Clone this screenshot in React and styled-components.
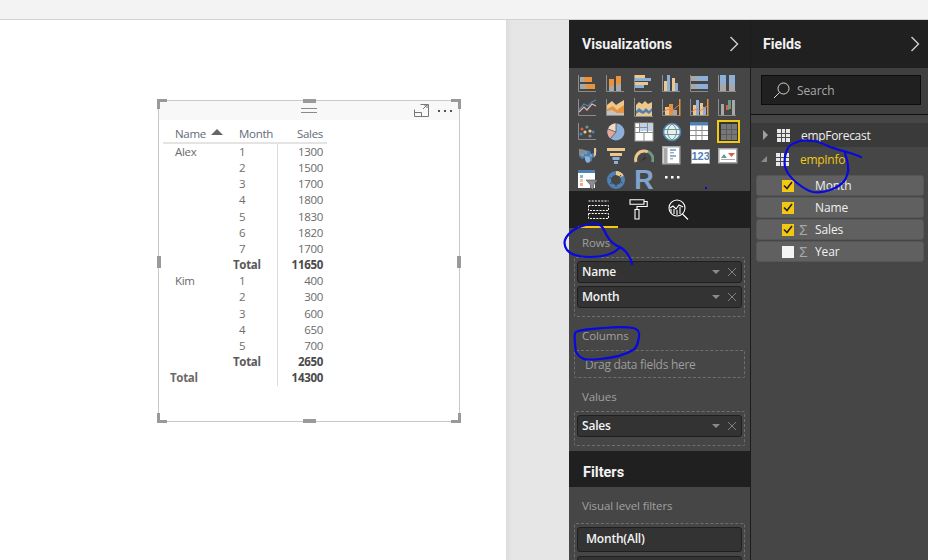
import React from "react";
import styled, { createGlobalStyle } from "styled-components";

const GlobalStyle = createGlobalStyle`
  html, body {
    margin: 0;
    height: 100%;
    overflow: hidden;
    background: #fff;
    font-family: "Open Sans", "Noto Sans", sans-serif;
  }
`;

const ORANGE = "#e8923e";
const GREY = "#a8a8a8";
const BLUE = "#8db0d8";
const TAN = "#ecc88e";
const AXIS = "#8c8c8c";
const DARKBLUE = "#4f81b5";

const Axis = () => <path d="M.5 1v16.5H18" fill="none" stroke={AXIS} />;

const R = ({ x, y, w, h, c }) => <rect x={x} y={y} width={w} height={h} fill={c} />;

const icons = [
  <><Axis /><R x={2} y={3} w={4} h={5} c={GREY} /><R x={6} y={3} w={8} h={5} c={ORANGE} /><R x={2} y={10} w={6} h={5} c={GREY} /><R x={8} y={10} w={9} h={5} c={ORANGE} /></>,
  <><Axis /><R x={3} y={12} w={5} h={5} c={GREY} /><R x={3} y={5} w={5} h={7} c={ORANGE} /><R x={10} y={10} w={5} h={7} c={GREY} /><R x={10} y={2} w={5} h={8} c={ORANGE} /></>,
  <><Axis /><R x={1} y={1} w={10} h={3} c={TAN} /><R x={1} y={4} w={16} h={3} c={BLUE} /><R x={1} y={8} w={13} h={3} c={TAN} /><R x={1} y={11} w={9} h={3} c={BLUE} /></>,
  <><Axis /><R x={2} y={7} w={3} h={10} c={TAN} /><R x={5} y={1} w={3} h={16} c={BLUE} /><R x={10} y={4} w={3} h={13} c={TAN} /><R x={13} y={9} w={3} h={8} c={BLUE} /></>,
  <><Axis /><R x={1} y={2} w={6} h={5} c={GREY} /><R x={7} y={2} w={11} h={5} c={BLUE} /><R x={1} y={10} w={6} h={5} c={GREY} /><R x={7} y={10} w={11} h={5} c={BLUE} /></>,
  <><Axis /><R x={2} y={10} w={6} h={7} c={GREY} /><R x={2} y={1} w={6} h={9} c={BLUE} /><R x={11} y={11} w={6} h={6} c={GREY} /><R x={11} y={1} w={6} h={10} c={BLUE} /></>,
  <><Axis /><path d="M1 14l5-5 3 3 5-6 4 2" fill="none" stroke="#e3b7a4" strokeWidth="1.2" /><path d="M1 12l5-6 4 2 4-4 4-2" fill="none" stroke={DARKBLUE} strokeWidth="1.2" /></>,
  <><Axis /><path d="M1 17V7l5-4 4 4 3-2 5-3v15z" fill={TAN} /><path d="M1 17v-6l6-3 4 4 7-5v10z" fill={ORANGE} /><path d="M1 17v-4l5-1 5 3 7 0v2z" fill="#c2c2c2" /></>,
  <><path d="M.5 0v18.5H19" fill="none" stroke={AXIS} /><path d="M2 18V7l3-3 3 2 3-3 3 3 4-2v14z" fill={TAN} /><path d="M2 13l3-3 4 3 3-3 3 3 3-3v3l-3 3-3-2-3 2-4-2-3 2z" fill={DARKBLUE} /></>,
  <><Axis /><R x={3} y={9} w={4} h={8} c={TAN} /><R x={11} y={12} w={4} h={5} c={GREY} /><R x={7} y={6} w={4} h={11} c={ORANGE} /><path d="M1 14l5-3 4 2 7-6" fill="none" stroke="#dc7f5a" /><R x={17} y={1} w={1.5} h={17} c={ORANGE} /></>,
  <><Axis /><R x={3} y={7} w={3} h={10} c={TAN} /><R x={6} y={2} w={3} h={15} c={BLUE} /><R x={10} y={5} w={3} h={12} c={TAN} /><R x={13} y={9} w={3} h={8} c={BLUE} /><path d="M1 14l5-3 4 2 7-5" fill="none" stroke="#dc7f5a" /><R x={17} y={1} w={1.5} h={17} c={ORANGE} /></>,
  <><Axis /><R x={3} y={6} w={3} h={11} c={GREY} /><R x={8} y={7} w={3} h={5} c="#d8603f" /><R x={10} y={2} w={3} h={9} c="#6b9a86" /><R x={14} y={2} w={3} h={15} c={GREY} /></>,
  <><Axis /><circle cx="4" cy="7" r="1.6" fill="#d8603f" /><circle cx="9" cy="5" r="1.6" fill="#6b9a86" /><circle cx="7" cy="10" r="1.6" fill={TAN} /><circle cx="3" cy="12" r="1.6" fill={DARKBLUE} /><circle cx="12" cy="9" r="1.6" fill={TAN} /><circle cx="15" cy="10" r="1.6" fill={DARKBLUE} /><circle cx="12" cy="14" r="1.6" fill="#8c8c8c" /></>,
  <><circle cx="10" cy="10" r="8.5" fill={BLUE} /><path d="M10 10V1.5a8.5 8.5 0 0 0-8 5.5z" fill="#f2dcc0" /><path d="M10 10L2 7a8.5 8.5 0 0 0 2.5 9.5z" fill="#e6a89c" /><path d="M10 10V1.5M10 10L2 7M10 10l-5.5 6.5" stroke="#464646" strokeWidth=".7" /></>,
  <><rect x="1" y="1" width="18" height="18" fill="#fff" stroke="#9c9c9c" /><R x={6} y={2} w={7} h={3} c="#bcd2ea" /><R x={14} y={2} w={4} h={7} c="#bcd2ea" /><R x={6} y={6} w={7} h={3} c="#bcd2ea" /><path d="M5.5 1v9M1 10.5h18M1 5.5h4.5M10 10.5V19M5.5 5.5h8M13.5 1v9" stroke="#8c8c8c" fill="none" /></>,
  <><circle cx="10" cy="10" r="8.5" fill="#e8eef3" stroke={DARKBLUE} strokeWidth="1.6" /><path d="M2 7.5h16M2 12.5h16M10 2c-6 4-6 12 0 16M10 2c6 4 6 12 0 16" fill="none" stroke="#6b9a86" /></>,
  <><rect x="0" y="0" width="18" height="18" fill="#fff" /><R x={0} y={0} w={18} h={3.5} c={DARKBLUE} /><path d="M6 3.5V18M12 3.5V18M0 8.5h18M0 13.5h18" stroke="#8c8c8c" /></>,
  <><R x={0} y={0} w={20} h={20} c="#333" /><R x={2} y={2} w={16} h={16} c="#777" /><path d="M7.5 2v16M12.5 2v16M2 7.5h16M2 12.5h16" stroke="#5c5c5c" /></>,
  <><path d="M1 3l6 1 5 1 1 3 3-1 1-5 2 2-2 7-3 1 0 3-3 1-2-3-3-1-2 1-3-3z" fill={DARKBLUE} /><path d="M1 3l6 1v4l-6 1z" fill="#8a8a8a" /><path d="M7 10l5 1v5l-3 1-2-3z" fill={BLUE} /><path d="M16 2h2v7l-2 2z" fill={TAN} /><path d="M3 9h3M8 5v3M13 8v3" stroke="#ddd" strokeWidth=".6" /></>,
  <><R x={1} y={2} w={18} h={3} c={TAN} /><R x={4} y={7} w={12} h={3} c={TAN} /><R x={6.5} y={11} w={7} h={3} c={BLUE} /><R x={8} y={15} w={4} h={3} c={BLUE} /></>,
  <><path d="M2 16a8.5 8.5 0 0 1 8-11" fill="none" stroke={TAN} strokeWidth="3" /><path d="M10 5a8.5 8.5 0 0 1 4 1" fill="none" stroke={TAN} strokeWidth="3" /><path d="M14 5.5A8.5 8.5 0 0 1 18.5 16" fill="none" stroke="#6b9a86" strokeWidth="3" /><path d="M7 15l4-5 1 3z" fill="#333" /></>,
  <><rect x=".75" y=".75" width="17" height="17" fill="#fff" stroke="#a8a8a8" strokeWidth="1.5" /><R x={2} y={2} w={3.5} h={15} c={GREY} /><R x={8} y={3} w={6} h={2} c={BLUE} /><R x={8} y={6} w={4} h={1.4} c={GREY} /><R x={8} y={9} w={6} h={2} c={BLUE} /><R x={8} y={12} w={3} h={1.4} c={GREY} /></>,
  null,
  <><rect x=".75" y="2.75" width="18" height="14" fill="#fff" stroke="#a8a8a8" strokeWidth="1.5" /><path d="M3 12l3-4 3 4z" fill="#6b9a86" /><path d="M10 7h7l-3.5 4z" fill="#d8603f" /><R x={3} y={13} w={14} h={1} c={GREY} /></>,
  <><R x={0} y={0} w={17} h={18} c="#fff" /><R x={0} y={0} w={17} h={3} c={DARKBLUE} /><R x={2} y={5} w={3} h={3} c={BLUE} /><R x={2} y={9} w={3} h={3} c={TAN} /><R x={2} y={13} w={3} h={3} c="#e6a89c" /><path d="M8 10h12l-4.5 5v5l-3-2v-3z" fill="#8c8c8c" stroke="#464646" strokeWidth=".6" /></>,
  <><circle cx="10" cy="10" r="7" fill="none" stroke={DARKBLUE} strokeWidth="4" /><path d="M10 3a7 7 0 0 1 6 3.5" fill="none" stroke={TAN} strokeWidth="4" /><path d="M3.4 7.5l2 1M15 5l-1.5 2M16.3 13l-2-1M10 17v-2.5M4 14l2-1.5" stroke="#464646" strokeWidth="1" /></>,
  null,
  null,
];

const MoreDots = () => (
  <DotsIcon viewBox="0 0 15 3">
    <rect x="0" y="0" width="2.5" height="2.5" fill="#fff" />
    <rect x="6" y="0" width="2.5" height="2.5" fill="#fff" />
    <rect x="12" y="0" width="2.5" height="2.5" fill="#fff" />
  </DotsIcon>
);

const Chevron = () => (
  <ChevronIcon viewBox="0 0 10 16">
    <path d="M1.5 1l7 7-7 7" fill="none" stroke="#cfcfcf" strokeWidth="1.4" />
  </ChevronIcon>
);

const FieldWell = ({ name }) => (
  <Pill>
    <PillName>{name}</PillName>
    <PillCaret />
    <PillClose viewBox="0 0 10 10">
      <path d="M1 1l8 8M9 1l-8 8" stroke="#808080" strokeWidth="1" />
    </PillClose>
  </Pill>
);

const TableGlyph = () => (
  <svg width="13" height="13" viewBox="0 0 13 13">
    <rect width="13" height="13" fill="#e8e8e8" />
    <path d="M4.5 0v13M8.5 0v13M0 4.5h13M0 8.5h13" stroke="#4a4a4a" strokeWidth="1" />
  </svg>
);

const FieldRow = ({ name, checked, sigma }) => (
  <FieldItem>
    <Check $checked={checked}>
      {checked && (
        <svg width="10" height="9" viewBox="0 0 10 9">
          <path d="M1 4.5l3 3L9 1" fill="none" stroke="#222" strokeWidth="1.6" />
        </svg>
      )}
    </Check>
    <Sigma>{sigma ? "Σ" : ""}</Sigma>
    <FieldName>{name}</FieldName>
  </FieldItem>
);

const rows = [
  ["Alex", "1", "1300"],
  ["", "2", "1500"],
  ["", "3", "1700"],
  ["", "4", "1800"],
  ["", "5", "1830"],
  ["", "6", "1820"],
  ["", "7", "1700"],
  ["", "Total", "11650", "sub"],
  ["Kim", "1", "400"],
  ["", "2", "300"],
  ["", "3", "600"],
  ["", "4", "650"],
  ["", "5", "700"],
  ["", "Total", "2650", "sub"],
  ["Total", "", "14300", "grand"],
];

const App = () => {
  return (
    <Page>
      <GlobalStyle />
      <TopBar />
      <Main>
        <Canvas>
          <Visual>
            <VisualHeader>
              <Grip />
              <VisualTools>
                <svg width="15" height="13" viewBox="0 0 15 13">
                  <path d="M.5 5.5v7h14V.5h-8M.5 8.5h7v4M9 5l4-4M10 1h3v3" fill="none" stroke="#777" />
                </svg>
                <ToolDots>
                  <i />
                  <i />
                  <i />
                </ToolDots>
              </VisualTools>
            </VisualHeader>
            <Handle $x="left" $y="top" />
            <Handle $x="right" $y="top" />
            <Handle $x="left" $y="bottom" />
            <Handle $x="right" $y="bottom" />
            <EdgeHandle $side="top" />
            <EdgeHandle $side="bottom" />
            <EdgeHandle $side="left" />
            <EdgeHandle $side="right" />
            <Matrix>
              <HeadCell $pad="12px">
                Name
                <SortArrow />
              </HeadCell>
              <HeadCell $pad="6px">Month</HeadCell>
              <HeadCell $right>Sales</HeadCell>
              {rows.map(([name, month, sales, kind], i) => (
                <React.Fragment key={i}>
                  <NameCell $grand={kind === "grand"}>{name}</NameCell>
                  <MonthCell $bold={kind === "sub"}>{month}</MonthCell>
                  <SalesCell $bold={!!kind}>{sales}</SalesCell>
                </React.Fragment>
              ))}
            </Matrix>
          </Visual>
        </Canvas>
        <Gutter />
        <VizPanel>
          <PanelHeader>
            <PanelTitle>Visualizations</PanelTitle>
            <Chevron />
          </PanelHeader>
          <IconGrid>
            {icons.map((icon, i) => (
              <IconCell key={i} $selected={i === 17}>
                {i === 22 ? (
                  <CardIcon>123</CardIcon>
                ) : i === 26 ? (
                  <RIcon>R</RIcon>
                ) : i === 27 ? (
                  <MoreDots />
                ) : (
                  <svg width="20" height="20" viewBox="0 0 20 20">
                    {icon}
                  </svg>
                )}
              </IconCell>
            ))}
          </IconGrid>
          <Tabs>
            <Tab $active>
              <svg width="21" height="19" viewBox="0 0 21 19">
                <path d="M.5 1h20M.5 5.5h20v5H.5zM.5 13.5h20v5H.5z" fill="none" stroke="#fff" strokeDasharray="2 1.2" />
              </svg>
            </Tab>
            <Tab>
              <svg width="19" height="21" viewBox="0 0 19 21">
                <path d="M1 .7h14v4.6H1zM15 2.5h3.2v5H8v3M6 10.5h4V20H6z" fill="none" stroke="#fff" strokeWidth="1.1" />
              </svg>
            </Tab>
            <Tab>
              <svg width="21" height="21" viewBox="0 0 21 21">
                <circle cx="9" cy="9" r="8" fill="none" stroke="#fff" strokeWidth="1.1" />
                <path d="M14.5 15l5.5 5.5M2 9l3-2 3 3 3-4 4 2M3 14V10M6 15V10M9 16v-5M12 15V8" fill="none" stroke="#fff" strokeWidth="1.1" />
              </svg>
            </Tab>
          </Tabs>
          <WellArea>
            <WellLabel>Rows</WellLabel>
            <Well>
              <FieldWell name="Name" />
              <FieldWell name="Month" />
            </Well>
            <WellLabel>Columns</WellLabel>
            <Well $empty>Drag data fields here</Well>
            <WellLabel>Values</WellLabel>
            <Well>
              <FieldWell name="Sales" />
            </Well>
          </WellArea>
          <FiltersHeader>Filters</FiltersHeader>
          <FilterArea>
            <WellLabel>Visual level filters</WellLabel>
            <Well>
              <FilterPill>Month(All)</FilterPill>
              <FilterPill />
            </Well>
          </FilterArea>
        </VizPanel>
        <FieldsPanel>
          <PanelHeader $compact>
            <PanelTitle>Fields</PanelTitle>
            <Chevron />
          </PanelHeader>
          <SearchArea>
            <SearchBox>
              <svg width="17" height="17" viewBox="0 0 17 17">
                <circle cx="10.5" cy="6.5" r="5.5" fill="none" stroke="#d8d8d8" />
                <path d="M6.5 10.5L1 16" stroke="#d8d8d8" />
              </svg>
              Search
            </SearchBox>
          </SearchArea>
          <FieldList>
            <TableRow $dark>
              <Caret $open={false} />
              <TableGlyph />
              <TableName>empForecast</TableName>
            </TableRow>
            <TableRow>
              <Caret $open />
              <TableGlyph />
              <TableName $active>empInfo</TableName>
            </TableRow>
            <FieldGroup>
              <FieldRow name="Month" checked />
              <FieldRow name="Name" checked />
              <FieldRow name="Sales" checked sigma />
              <FieldRow name="Year" sigma />
            </FieldGroup>
          </FieldList>
        </FieldsPanel>
      </Main>
      {/* pen scribbles drawn over the screenshot */}
      <Scribbles viewBox="0 0 928 560">
        <g fill="none" stroke="#0808e0" strokeWidth="2.2" strokeLinecap="round" strokeLinejoin="round">
          <path d="M565 240C568 232 578 226 590 224C597 223 600 224 603 228C606 234 609 243 620 247C615 253 605 257 590 257C578 257 570 254 567 250C565 247 564 243 565 240M620 247C625 250 630 256 632 264" />
          <path d="M576 352C575 345 574 338 575 333C576 330 590 329 603 328C615 327 628 327 633 328C638 329 640 332 639 337C638 343 637 348 633 350C625 355 612 358 600 359C592 360 585 360 582 358C578 356 577 354 576 352" />
          <path d="M861 157C857 155 853 154 850 153C843 151 836 149 830 147C824 144 818 141 813 141C806 140 801 140 797 142C791 144 788 147 787 150C785 155 784 161 785 167C787 173 792 179 797 183C802 187 808 191 813 192C819 193 825 192 830 190C836 188 842 184 845 180C847 176 849 171 848 167C848 162 846 157 845 153" />
        </g>
        <rect x="705" y="187" width="2" height="2" fill="#0808e0" />
      </Scribbles>
    </Page>
  );
};

const Page = styled.div`
  position: relative;
  width: 928px;
  height: 560px;
  overflow: hidden;
  display: flex;
  flex-direction: column;
`;

const TopBar = styled.div`
  height: 19px;
  flex: none;
  background: #f3f3f3;
  border-bottom: 1px solid #d2d2d2;
`;

const Main = styled.div`
  flex: 1;
  display: flex;
  min-height: 0;
`;

const Canvas = styled.div`
  width: 506px;
  flex: none;
  background: #fff;
  padding: 80px 0 0 158px;
  box-sizing: border-box;
`;

const Gutter = styled.div`
  width: 63px;
  flex: none;
  background: linear-gradient(90deg, #dcdcdc 0, #e6e6e6 6px);
`;

const Visual = styled.div`
  position: relative;
  width: 302px;
  height: 322px;
  box-sizing: border-box;
  border: 1px solid #c8c8c8;
`;

const VisualHeader = styled.div`
  position: relative;
  height: 19px;
  background: #f8f8f8;
  display: flex;
  justify-content: center;
  align-items: center;
`;

const Grip = styled.div`
  width: 16px;
  height: 3px;
  border-top: 1px solid #8a8a8a;
  border-bottom: 1px solid #8a8a8a;
`;

const VisualTools = styled.div`
  position: absolute;
  right: 7px;
  top: 3px;
  display: flex;
  align-items: center;
  gap: 9px;
`;

const ToolDots = styled.div`
  display: flex;
  gap: 4px;

  i {
    display: block;
    width: 2px;
    height: 2px;
    background: #555;
  }
`;

const Handle = styled.div`
  position: absolute;
  width: 10px;
  height: 10px;
  ${(p) => p.$x}: -2px;
  ${(p) => p.$y}: -2px;
  border-${(p) => p.$x}: 3px solid #999;
  border-${(p) => p.$y}: 3px solid #999;
  box-sizing: border-box;
`;

const EdgeHandle = styled.div`
  position: absolute;
  background: #9a9a9a;
  ${(p) =>
    p.$side === "top" || p.$side === "bottom"
      ? `width: 13px; height: 4px; left: 144px; ${p.$side}: -2px;`
      : `width: 4px; height: 12px; top: 155px; ${p.$side}: -2px;`}
`;

const Matrix = styled.div`
  display: grid;
  grid-template-columns: 70px 45px 49px;
  grid-template-rows: 24px;
  grid-auto-rows: 16.17px;
  margin-left: 4px;
  font-size: 11.5px;
  letter-spacing: -0.3px;
  color: #6a6a6a;
`;

const HeadCell = styled.div`
  padding-left: ${(p) => p.$pad || 0};
  padding-right: ${(p) => (p.$right ? "4px" : 0)};
  text-align: ${(p) => (p.$right ? "right" : "left")};
  line-height: 28px;
  height: 24px;
  color: #5f6b78;
  border-bottom: 2px solid #e4e4e4;
  box-sizing: border-box;
  white-space: nowrap;
`;

const SortArrow = styled.span`
  display: inline-block;
  margin-left: 5px;
  vertical-align: 3px;
  border-left: 6px solid transparent;
  border-right: 6px solid transparent;
  border-bottom: 6px solid #666;
`;

const NameCell = styled.div`
  padding-left: ${(p) => (p.$grand ? "7px" : "12px")};
  font-weight: ${(p) => (p.$grand ? 700 : 400)};
  line-height: 16px;
  white-space: nowrap;
`;

const MonthCell = styled.div`
  padding-left: ${(p) => (p.$bold ? 0 : "6px")};
  font-weight: ${(p) => (p.$bold ? 700 : 400)};
  line-height: 16px;
  border-right: 1px solid #dcdcdc;
  color: ${(p) => (p.$bold ? "#5a5a5a" : "#6e6e6e")};
`;

const SalesCell = styled.div`
  padding-right: 4px;
  text-align: right;
  font-weight: ${(p) => (p.$bold ? 700 : 400)};
  color: ${(p) => (p.$bold ? "#4a4a4a" : "#6a6a6a")};
  line-height: 16px;
`;

const VizPanel = styled.div`
  width: 181px;
  flex: none;
  background: #464646;
  display: flex;
  flex-direction: column;
  border-right: 1px solid #1c1c1c;
`;

const PanelHeader = styled.div`
  height: 48px;
  flex: none;
  box-sizing: border-box;
  background: #202020;
  display: flex;
  align-items: center;
  justify-content: space-between;
  padding: ${(p) => (p.$compact ? "0 8px 0 12px" : "0 11px 0 13px")};
`;

const PanelTitle = styled.div`
  font-family: Roboto, sans-serif;
  font-weight: 700;
  font-size: 14.2px;
  color: #f2f2f2;
`;

const ChevronIcon = styled.svg`
  width: 10px;
  height: 16px;
`;

const IconGrid = styled.div`
  height: 123px;
  flex: none;
  box-sizing: border-box;
  padding: 4px 0 0 6px;
  display: grid;
  grid-template-columns: repeat(6, 28px);
  grid-auto-rows: 24px;
  background: #464646;
`;

const IconCell = styled.div`
  width: 26px;
  height: 24px;
  display: flex;
  align-items: center;
  justify-content: center;
  box-sizing: border-box;
  ${(p) => p.$selected && "outline: 2px solid #f2c811; outline-offset: -1px; margin: 1px 0 0 3px; width: 21px; height: 21px;"}
`;

const CardIcon = styled.div`
  width: 17px;
  height: 13px;
  background: #fff;
  border: 1.5px solid #a8a8a8;
  font-family: "Liberation Sans", sans-serif;
  font-size: 11px;
  font-weight: 700;
  line-height: 12px;
  text-align: center;
  color: ${DARKBLUE};
  overflow: hidden;
`;

const RIcon = styled.div`
  font-family: "Liberation Sans", sans-serif;
  font-size: 27px;
  font-weight: 700;
  line-height: 24px;
  color: #7fa3cc;
`;

const DotsIcon = styled.svg`
  width: 15px;
  height: 3px;
  margin-bottom: 6px;
`;

const Tabs = styled.div`
  height: 37px;
  flex: none;
  box-sizing: border-box;
  background: #202020;
  padding-left: 9px;
  display: flex;
`;

const Tab = styled.div`
  width: 40px;
  display: flex;
  align-items: center;
  justify-content: center;
  padding-top: 1px;
  box-sizing: border-box;
  border-bottom: 2px solid ${(p) => (p.$active ? "#f2c811" : "transparent")};
`;

const WellArea = styled.div`
  height: 223px;
  flex: none;
  box-sizing: border-box;
  padding: 5px 5px 0 5px;
`;

const WellLabel = styled.div`
  font-size: 11.5px;
  line-height: 20px;
  height: 24px;
  padding-left: 8px;
  color: #a0a0a0;
  letter-spacing: -0.1px;
`;

const Well = styled.div`
  box-sizing: border-box;
  border: 1px dashed #6e6e6e;
  border-radius: 2px;
  padding: ${(p) => (p.$empty ? "0 0 0 10px" : "3px 2px 8px")};
  margin-bottom: 9px;
  display: flex;
  flex-direction: column;
  gap: 3px;
  font-size: 12px;
  line-height: 28px;
  color: #9c9c9c;
  ${(p) => p.$empty && "height: 28px; letter-spacing: -0.3px;"}
`;

const Pill = styled.div`
  height: 22px;
  box-sizing: border-box;
  background: #333;
  border: 1px solid #1f1f1f;
  border-radius: 3px;
  display: flex;
  align-items: center;
  padding: 0 3px 0 4px;
`;

const PillName = styled.span`
  flex: 1;
  font-size: 12px;
  font-weight: 600;
  letter-spacing: -0.2px;
  color: #f4f4f4;
`;

const PillCaret = styled.span`
  width: 0;
  height: 0;
  margin-right: 7px;
  border-left: 4px solid transparent;
  border-right: 4px solid transparent;
  border-top: 4px solid #8a8a8a;
`;

const PillClose = styled.svg`
  width: 10px;
  height: 10px;
  margin-right: 1px;
`;

const FiltersHeader = styled.div`
  height: 36px;
  flex: none;
  box-sizing: border-box;
  background: #202020;
  padding: 6px 0 0 14px;
  line-height: 32px;
  font-family: Roboto, sans-serif;
  font-weight: 700;
  font-size: 14.5px;
  color: #f2f2f2;
`;

const FilterArea = styled.div`
  padding: 9px 5px 0 5px;

  ${Well} {
    margin-top: 3px;
  }
`;

const FilterPill = styled.div`
  height: 25px;
  flex: none;
  box-sizing: border-box;
  background: #333;
  border: 1px solid #1f1f1f;
  border-radius: 3px;
  margin-bottom: 1px;
  padding-left: 8px;
  font-size: 12px;
  font-weight: 600;
  letter-spacing: -0.2px;
  line-height: 22px;
  color: #f4f4f4;
`;

const FieldsPanel = styled.div`
  flex: 1;
  background: #464646;
  display: flex;
  flex-direction: column;
`;

const SearchArea = styled.div`
  height: 47px;
  flex: none;
  box-sizing: border-box;
  padding: 7px 7px 0 10px;
  background: #3f3f3f;
  border-bottom: 1px solid #111;
`;

const SearchBox = styled.div`
  height: 30px;
  box-sizing: border-box;
  background: #202020;
  border: 1px solid #0c0c0c;
  display: flex;
  align-items: center;
  gap: 7px;
  padding-left: 11px;
  font-size: 12px;
  letter-spacing: -0.1px;
  color: #a8a8a8;
`;

const FieldList = styled.div`
  padding-top: 8px;
`;

const TableRow = styled.div`
  height: ${(p) => (p.$dark ? "24px" : "28px")};
  display: flex;
  align-items: center;
  padding: ${(p) => (p.$dark ? 0 : "0 0 4px 0")};
  box-sizing: border-box;
  background: ${(p) => (p.$dark ? "#3a3a3a" : "#464646")};
`;

const Caret = styled.span`
  width: 0;
  height: 0;
  margin-left: ${(p) => (p.$open ? "10px" : "12px")};
  margin-right: 9px;
  ${(p) =>
    p.$open
      ? "border-left: 6px solid transparent; border-bottom: 6px solid #8a8a8a;"
      : "border-left: 5px solid #a0a0a0; border-top: 5px solid transparent; border-bottom: 5px solid transparent;"}
`;

const TableName = styled.span`
  margin-left: 11px;
  font-size: 12px;
  letter-spacing: -0.3px;
  color: ${(p) => (p.$active ? "#f2c811" : "#eeeeee")};
`;

const FieldGroup = styled.div`
  display: flex;
  flex-direction: column;
  gap: 1px;
  padding: 0 4px 0 5px;
`;

const FieldItem = styled.div`
  height: 21px;
  box-sizing: border-box;
  background: #606060;
  border: 1px solid #565656;
  border-radius: 3px;
  display: flex;
  align-items: center;
  padding-left: 25px;
`;

const Check = styled.span`
  width: 12px;
  height: 12px;
  flex: none;
  display: flex;
  align-items: center;
  justify-content: center;
  background: ${(p) => (p.$checked ? "#f2c811" : "#f4f4f4")};
`;

const Sigma = styled.span`
  width: 16px;
  flex: none;
  margin-left: 5px;
  font-family: "Liberation Sans", sans-serif;
  font-size: 14px;
  color: #a8a8a8;
`;

const FieldName = styled.span`
  font-size: 12px;
  letter-spacing: -0.1px;
  color: #f0f0f0;
`;

const Scribbles = styled.svg`
  position: absolute;
  inset: 0;
  width: 928px;
  height: 560px;
  pointer-events: none;
`;

export default App;
